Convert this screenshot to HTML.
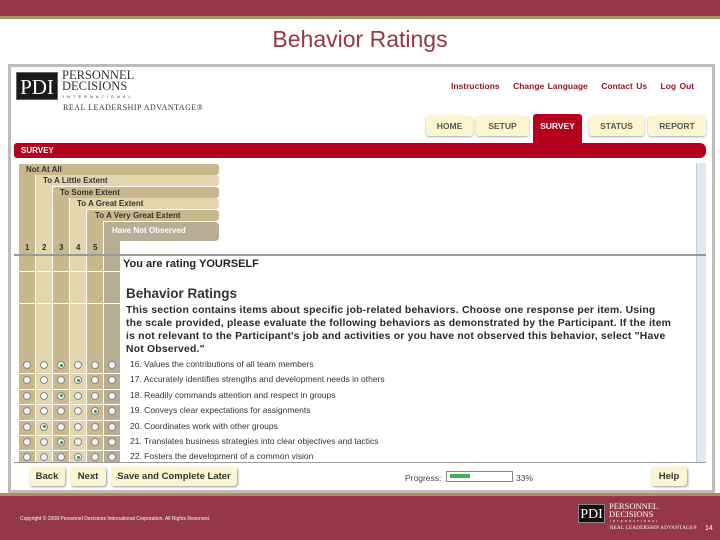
<!DOCTYPE html>
<html><head><style>
*{margin:0;padding:0;box-sizing:border-box}
body{width:720px;height:540px;position:relative;overflow:hidden;background:#fff;font-family:"Liberation Sans",sans-serif}
.a{position:absolute}
.col{position:absolute;width:16px}
.d{background:#c9b88d}.l{background:#e3d6ae}.g{background:#b6ad94}
.leg{position:absolute;left:19px;height:11px;font-size:8px;font-weight:bold;color:#333;line-height:11px;border-radius:0 3px 3px 0;width:200px}
.rad{position:absolute;width:8px;height:8px;border-radius:50%;background:#f4f4f4;border:1px solid #888}
.rad.on::after{content:"";position:absolute;left:1.5px;top:1.5px;width:3px;height:3px;border-radius:50%;background:#2a9a3a}
.item{position:absolute;left:130px;font-size:8.5px;color:#333}
.tab{position:absolute;top:116px;height:20px;background:#fbf6d0;font-size:8.5px;font-weight:bold;color:#555;text-align:center;line-height:20px;border-radius:3px;box-shadow:0 1px 2px #aaa}
.btn{position:absolute;top:467px;height:19px;background:#fbf6d0;border-radius:3px;box-shadow:1px 1px 2px #999;font-size:9.5px;font-weight:bold;color:#333;text-align:center;line-height:19px}
.sb{position:absolute;background:#dfe8f7;border-left:1px solid #ccc}
.n{position:absolute;top:243px;font-size:8px;font-weight:bold;color:#333}
</style></head><body>
<div class="a" style="left:0;top:0;width:720px;height:16px;background:#953744"></div>
<div class="a" style="left:0;top:16px;width:720px;height:3px;background:#a8935c"></div>
<div class="a" style="left:0;top:26px;width:720px;text-align:center;font-size:23px;color:#953744">Behavior Ratings</div>

<div class="a" style="left:8px;top:64px;width:707px;height:429px;border:3px solid #bdbdbd;background:#fff"></div>
<div class="a" style="left:16px;top:72px;width:42px;height:28px;background:#1a1a1a;color:#fff;font-family:'Liberation Serif',serif;font-size:21px;line-height:28px;text-align:center;border:1px solid #666">PDI</div>
<div class="a" style="left:62px;top:70px;font-family:'Liberation Serif',serif;font-size:12.5px;line-height:11px;color:#333">PERSONNEL<br>DECISIONS</div>
<div class="a" style="left:63px;top:94px;font-size:4px;letter-spacing:3px;color:#333">INTERNATIONAL</div>
<div class="a" style="left:63px;top:103px;font-family:'Liberation Serif',serif;font-size:8px;letter-spacing:.5px;color:#333">REAL LEADERSHIP ADVANTAGE®</div>
<div class="a" style="left:451px;top:81px;font-size:8.5px;font-weight:bold;color:#9b1528;word-spacing:1px">Instructions&nbsp;&nbsp;&nbsp; Change Language&nbsp;&nbsp;&nbsp; Contact Us&nbsp;&nbsp;&nbsp; Log Out</div>
<div class="tab" style="left:426px;width:47px">HOME</div>
<div class="tab" style="left:476px;width:53px">SETUP</div>
<div class="a" style="left:533px;top:114px;width:49px;height:33px;background:#b5001d;border-radius:3px"></div>
<div class="a" style="left:533px;top:116px;width:49px;height:20px;font-size:8.5px;font-weight:bold;color:#fff;text-align:center;line-height:20px">SURVEY</div>
<div class="tab" style="left:589px;width:55px">STATUS</div>
<div class="tab" style="left:648px;width:58px">REPORT</div>
<div class="a" style="left:14px;top:143px;width:692px;height:15px;background:#b5001d;border-radius:3px 6px 6px 3px;color:#fff;font-size:8px;font-weight:bold;line-height:15px;padding-left:7px">SURVEY</div>

<div class="col d" style="left:19px;top:164px;height:90px"></div>
<div class="col l" style="left:36px;top:175px;height:79px"></div>
<div class="col d" style="left:53px;top:187px;height:67px"></div>
<div class="col l" style="left:70px;top:198px;height:56px"></div>
<div class="col d" style="left:87px;top:210px;height:44px"></div>
<div class="col g" style="left:104px;top:222px;height:32px"></div>
<div class="leg d" style="top:164px;padding-left:7px">Not At All</div>
<div class="leg l" style="top:175px;left:36px;width:183px;padding-left:7px">To A Little Extent</div>
<div class="leg d" style="top:187px;left:53px;width:166px;padding-left:7px">To Some Extent</div>
<div class="leg l" style="top:198px;left:70px;width:149px;padding-left:7px">To A Great Extent</div>
<div class="leg d" style="top:210px;left:87px;width:132px;padding-left:8px">To A Very Great Extent</div>
<div class="leg g" style="top:222px;left:104px;width:115px;height:19px;padding-left:8px;line-height:17px;color:#fff;border-radius:0 4px 4px 0">Have Not Observed</div>
<div class="a" style="left:120px;top:241px;width:99px;height:14px;background:#fff"></div>
<div class="n" style="left:25px">1</div><div class="n" style="left:42px">2</div><div class="n" style="left:59px">3</div><div class="n" style="left:76px">4</div><div class="n" style="left:93px">5</div>
<div class="sb" style="left:696px;top:163px;width:10px;height:91px"></div>
<div class="a" style="left:14px;top:254px;width:692px;height:2px;background:#999"></div>

<div class="col d" style="left:19px;top:256px;height:206px"></div>
<div class="col l" style="left:36px;top:256px;height:206px"></div>
<div class="col d" style="left:53px;top:256px;height:206px"></div>
<div class="col l" style="left:70px;top:256px;height:206px"></div>
<div class="col d" style="left:87px;top:256px;height:206px"></div>
<div class="col g" style="left:104px;top:256px;height:206px"></div>
<div class="a" style="left:19px;top:271px;width:102px;height:1px;background:#fff"></div>
<div class="a" style="left:19px;top:303px;width:102px;height:1px;background:#fff"></div>
<div class="a" style="left:123px;top:258px;font-size:11px;font-weight:bold;color:#222">You are rating YOURSELF</div>
<div class="a" style="left:126px;top:286px;font-size:13.5px;font-weight:bold;color:#333">Behavior Ratings</div>
<div class="a" style="left:126px;top:304px;white-space:nowrap;font-size:10.4px;letter-spacing:0.2px;font-weight:bold;color:#2a2a2a;line-height:13px">This section contains items about specific job-related behaviors. Choose one response per item. Using<br>the scale provided, please evaluate the following behaviors as demonstrated by the Participant. If the item<br>is not relevant to the Participant's job and activities or you have not observed this behavior, select "Have<br>Not Observed."</div>
<div class="sb" style="left:696px;top:256px;width:10px;height:206px"></div>
<div class="a" style="left:14px;top:462px;width:692px;height:1px;background:#999"></div>

<div id="rows"></div>
<script>
var sel=[3,4,3,5,2,3,4],items=["16. Values the contributions of all team members","17. Accurately identifies strengths and development needs in others","18. Readily commands attention and respect in groups","19. Conveys clear expectations for assignments","20. Coordinates work with other groups","21. Translates business strategies into clear objectives and tactics","22. Fosters the development of a common vision"],h="";
for(var r=0;r<7;r++){var y=361+r*15.4;if(r>0)h+='<div class="a" style="left:19px;top:'+(y-3)+'px;width:102px;height:1px;background:#fff"></div>';
for(var c=0;c<6;c++)h+='<div class="rad'+(c+1==sel[r]?' on':'')+'" style="left:'+(23+c*17)+'px;top:'+y+'px"></div>';
h+='<div class="item" style="top:'+(y-2)+'px">'+items[r]+'</div>';}
document.getElementById('rows').innerHTML=h;
</script>

<div class="btn" style="left:29px;width:36px">Back</div>
<div class="btn" style="left:70px;width:36px">Next</div>
<div class="btn" style="left:111px;width:126px">Save and Complete Later</div>
<div class="a" style="left:405px;top:473px;font-size:8.5px;color:#444">Progress:</div>
<div class="a" style="left:446px;top:471px;width:67px;height:11px;border:1px solid #888;background:#fff"></div>
<div class="a" style="left:450px;top:474px;width:20px;height:4px;background:#3cb44a"></div>
<div class="a" style="left:516px;top:473px;font-size:8.5px;color:#444">33%</div>
<div class="btn" style="left:651px;width:36px">Help</div>

<div class="a" style="left:0;top:493px;width:720px;height:3px;background:#a8935c"></div>
<div class="a" style="left:0;top:496px;width:720px;height:44px;background:#953744"></div>
<div class="a" style="left:20px;top:516px;font-size:5px;color:#fff">Copyright © 2008 Personnel Decisions International Corporation. All Rights Reserved.</div>
<div class="a" style="left:578px;top:504px;width:27px;height:19px;background:#111;color:#fff;font-family:'Liberation Serif',serif;font-size:14px;line-height:19px;text-align:center;border:1px solid #888">PDI</div>
<div class="a" style="left:609px;top:502px;font-family:'Liberation Serif',serif;font-size:8.5px;line-height:8px;color:#fff">PERSONNEL<br>DECISIONS</div>
<div class="a" style="left:610px;top:519px;font-size:3px;letter-spacing:2px;color:#fff">INTERNATIONAL</div>
<div class="a" style="left:610px;top:526px;font-family:'Liberation Serif',serif;font-size:5px;color:#fff;letter-spacing:.3px">REAL LEADERSHIP ADVANTAGE®</div>
<div class="a" style="left:705px;top:525px;font-size:7px;color:#fff">14</div>
</body></html>
